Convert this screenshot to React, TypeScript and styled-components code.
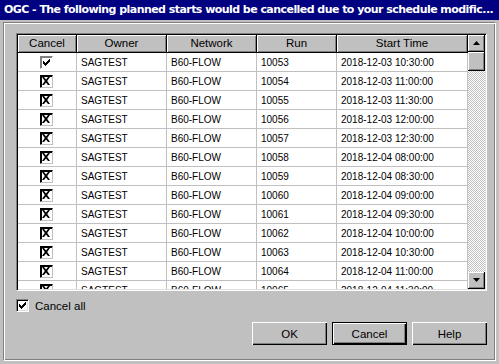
import React from 'react';
import styled, { createGlobalStyle } from 'styled-components';

const GlobalStyle = createGlobalStyle`
  html, body {
    margin: 0;
    padding: 0;
    background: #c0c0c0;
  }
  body {
    font-family: "Liberation Sans", Arial, sans-serif;
    font-size: 11px;
    color: #000;
  }
`;

type Row = { run: string; time: string; checked: 'check' | 'cross' };

const rows: Row[] = [
  { run: '10053', time: '2018-12-03 10:30:00', checked: 'check' },
  { run: '10054', time: '2018-12-03 11:00:00', checked: 'cross' },
  { run: '10055', time: '2018-12-03 11:30:00', checked: 'cross' },
  { run: '10056', time: '2018-12-03 12:00:00', checked: 'cross' },
  { run: '10057', time: '2018-12-03 12:30:00', checked: 'cross' },
  { run: '10058', time: '2018-12-04 08:00:00', checked: 'cross' },
  { run: '10059', time: '2018-12-04 08:30:00', checked: 'cross' },
  { run: '10060', time: '2018-12-04 09:00:00', checked: 'cross' },
  { run: '10061', time: '2018-12-04 09:30:00', checked: 'cross' },
  { run: '10062', time: '2018-12-04 10:00:00', checked: 'cross' },
  { run: '10063', time: '2018-12-04 10:30:00', checked: 'cross' },
  { run: '10064', time: '2018-12-04 11:00:00', checked: 'cross' },
  { run: '10065', time: '2018-12-04 11:30:00', checked: 'cross' },
];

const columns = ['Cancel', 'Owner', 'Network', 'Run', 'Start Time'];

const CheckMark = () => (
  <svg width="7" height="7" viewBox="0 0 7 7">
    <path d="M0 2h1v1h1v1h1V3h1V2h1V1h1V0h1v3H6v1H5v1H4v1H3v1H2V6H1V5H0z" fill="#000" />
  </svg>
);

const CrossMark = () => (
  <svg width="8" height="8" viewBox="0 0 8 8">
    <path d="M0 0h2l2 2.5L6 0h2L5.2 4 8 8H6L4 5.5 2 8H0l2.8-4z" fill="#000" />
  </svg>
);

const Arrow = ({ down }: { down?: boolean }) => (
  <svg width="7" height="4" viewBox="0 0 7 4">
    <path d={down ? 'M0 0h7L3.5 4z' : 'M3.5 0L7 4H0z'} fill="#000" />
  </svg>
);

const App: React.FC = () => {
  return <>
    <GlobalStyle />
    <Window>
      <TitleBar>OGC - The following planned starts would be cancelled due to your schedule modific...</TitleBar>
      <Frame>
        <GridBox>
          <Table>
            {columns.map(c => <HeaderCell key={c}>{c}</HeaderCell>)}
            {rows.map(r => (
              <React.Fragment key={r.run}>
                <Cell center>
                  <CellBox dark={r.checked === 'cross'}>
                    {r.checked === 'check' ? <CheckMark /> : <CrossMark />}
                  </CellBox>
                </Cell>
                <Cell>SAGTEST</Cell>
                <Cell>B60-FLOW</Cell>
                <Cell>{r.run}</Cell>
                <Cell>{r.time}</Cell>
              </React.Fragment>
            ))}
          </Table>
          <ScrollBar>
            <ScrollButton><Arrow /></ScrollButton>
            <Thumb />
            <Track />
            <ScrollButton><Arrow down /></ScrollButton>
          </ScrollBar>
        </GridBox>
        <CancelAllRow>
          <CheckBox><CheckMark /></CheckBox>
          <span>Cancel all</span>
        </CancelAllRow>
        <ButtonRow>
          <Button>OK</Button>
          <Button isDefault>Cancel</Button>
          <Button>Help</Button>
        </ButtonRow>
      </Frame>
    </Window>
  </>;
};

export default App;

const Window = styled.div`
  width: 499px;
  height: 364px;
  display: flex;
  flex-direction: column;
  background: #c0c0c0;
  overflow: hidden;
`;

const TitleBar = styled.div`
  height: 20px;
  line-height: 20px;
  flex: none;
  background: #000080;
  color: #fff;
  font-family: "DejaVu Sans", Verdana, sans-serif;
  font-weight: bold;
  font-size: 11px;
  letter-spacing: -0.55px;
  padding-left: 4px;
  white-space: nowrap;
  overflow: hidden;
`;

const Frame = styled.div`
  margin: 2px 3px 3px 3px;
  flex: 1;
  border-top: 1px solid #808080;
  border-left: 1px solid #808080;
  border-right: 1px solid #fff;
  border-bottom: 1px solid #fff;
  box-shadow: inset 1px 1px #fff, inset -1px -1px #808080;
  padding: 10px 0 0 12px;
  display: flex;
  flex-direction: column;
`;

const GridBox = styled.div`
  width: 467px;
  height: 254px;
  border-top: 1px solid #808080;
  border-left: 1px solid #808080;
  border-right: 1px solid #fff;
  border-bottom: 1px solid #fff;
  box-shadow: inset 1px 1px #000, inset -1px -1px #dfdfdf;
  padding: 1px;
  display: flex;
  background: #fff;
  overflow: hidden;
`;

const Table = styled.div`
  width: 450px;
  display: grid;
  grid-template-columns: 59px 90px 90px 80px 131px;
  grid-auto-rows: 19px;
  grid-template-rows: 18px;
  align-content: start;
  overflow: hidden;
`;

const HeaderCell = styled.div`
  background: #c0c0c0;
  border-right: 1px solid #000;
  border-bottom: 1px solid #000;
  box-shadow: inset 1px 1px #fff, inset -1px -1px #808080;
  text-align: center;
  font-size: 11.5px;
  line-height: 17px;
  white-space: nowrap;
  overflow: hidden;
`;

const Cell = styled.div<{ center?: boolean }>`
  border-right: 1px solid #c0c0c0;
  border-bottom: 1px solid #c0c0c0;
  padding-left: ${p => (p.center ? 0 : 4)}px;
  display: flex;
  align-items: center;
  justify-content: ${p => (p.center ? 'center' : 'flex-start')};
  font-size: 10px;
  white-space: nowrap;
  overflow: hidden;
`;

const CheckBox = styled.div`
  width: 9px;
  height: 9px;
  border-top: 1px solid #808080;
  border-left: 1px solid #808080;
  border-right: 1px solid #fff;
  border-bottom: 1px solid #fff;
  box-shadow: inset 1px 1px #000, inset -1px -1px #dfdfdf;
  padding: 1px;
  background: #fff;
  display: flex;
  align-items: center;
  justify-content: center;
  flex: none;
`;

const CellBox = styled(CheckBox)<{ dark?: boolean }>`
  margin-left: -2px;
  border-color: ${p => (p.dark ? '#000 #c0c0c0 #c0c0c0 #000' : '#808080 #fff #fff #808080')};
  box-shadow: ${p => (p.dark ? 'inset 1px 1px #000' : 'inset 1px 1px #808080')};
`;

const ScrollBar = styled.div`
  width: 17px;
  display: flex;
  flex-direction: column;
`;

const ScrollButton = styled.div`
  width: 17px;
  height: 17px;
  flex: none;
  box-sizing: border-box;
  background: #c0c0c0;
  border-right: 1px solid #000;
  border-bottom: 1px solid #000;
  box-shadow: inset 1px 1px #fff, inset -1px -1px #808080;
  display: flex;
  align-items: center;
  justify-content: center;
`;

const Thumb = styled(ScrollButton)`
  height: 19px;
`;

const Track = styled.div`
  flex: 1;
  background: repeating-conic-gradient(#c0c0c0 0 25%, #fff 0 50%) 0 0 / 2px 2px;
`;

const CancelAllRow = styled.div`
  display: flex;
  align-items: center;
  gap: 6px;
  margin-top: 8px;
  font-size: 11.5px;
`;

const ButtonRow = styled.div`
  display: flex;
  justify-content: flex-end;
  gap: 5px;
  margin-top: 10px;
  padding-right: 8px;
`;

const Button = styled.div<{ isDefault?: boolean }>`
  width: 75px;
  height: 23px;
  box-sizing: border-box;
  background: #c0c0c0;
  display: flex;
  align-items: center;
  justify-content: center;
  font-size: 11.5px;
  border: ${p => (p.isDefault ? '1px solid #000' : 'none')};
  box-shadow: inset 1px 1px #fff, inset -1px -1px #000, inset -2px -2px #808080;
`;
